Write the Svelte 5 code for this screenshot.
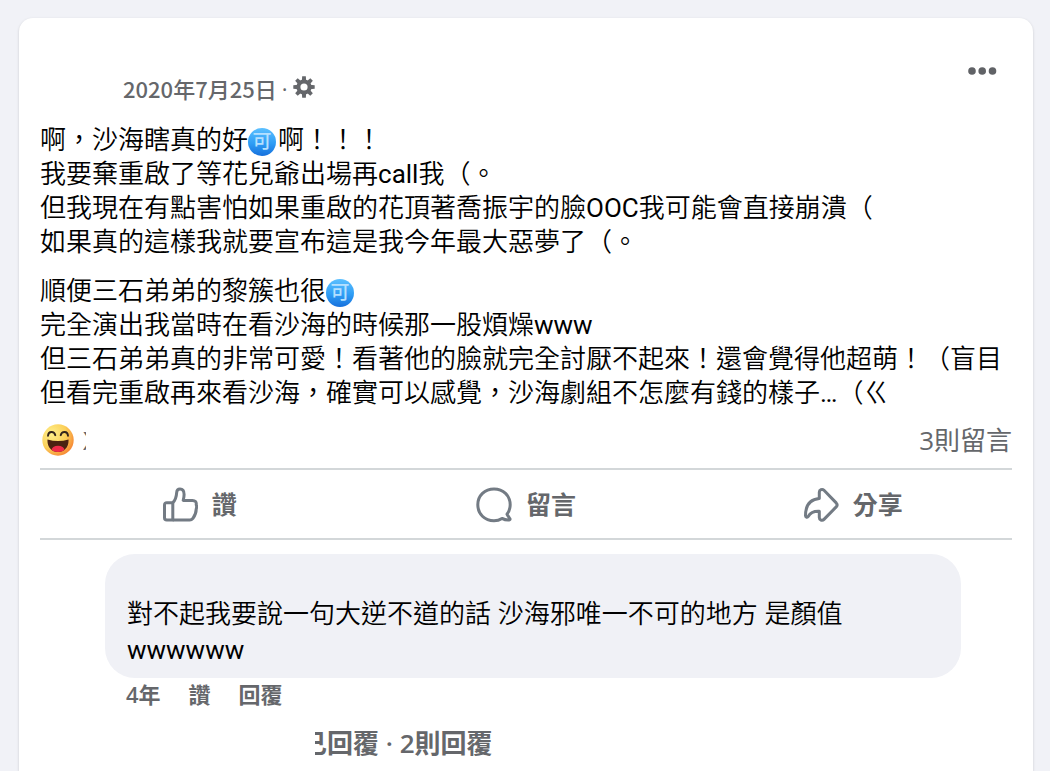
<script>
  const paragraphs = [
    [
      "啊，沙海瞎真的好[可]啊！！！",
      "我要棄重啟了等花兒爺出場再call我（。",
      "但我現在有點害怕如果重啟的花頂著喬振宇的臉OOC我可能會直接崩潰（",
      "如果真的這樣我就要宣布這是我今年最大惡夢了（。",
    ],
    [
      "順便三石弟弟的黎簇也很[可]",
      "完全演出我當時在看沙海的時候那一股煩燥www",
      "但三石弟弟真的非常可愛！看著他的臉就完全討厭不起來！還會覺得他超萌！（盲目",
      "但看完重啟再來看沙海，確實可以感覺，沙海劇組不怎麼有錢的樣子…（ㄍ",
    ],
  ];

  const comment = ["對不起我要說一句大逆不道的話 沙海邪唯一不可的地方 是顏值", "wwwwww"];

  const teeth = [0, 45, 90, 135, 180, 225, 270, 315];

  let liked = $state(false);

  // splits out the [可] emoji and latin words, which get their own styling
  function tokens(line) {
    return line.split(/(\[可\]|[A-Za-z…]+)/).filter(Boolean);
  }
</script>

{#snippet textLine(line)}
  <span class="line"
    >{#each tokens(line) as token}{#if token === "[可]"}<span class="badge">可</span
        >{:else if /^[A-Za-z…]/.test(token)}<span class="latin">{token}</span>{:else}{token}{/if}{/each}</span
  >
{/snippet}

<main class="page">
  <article class="card">
    <header class="header">
      <div class="header__meta">
        <a class="header__date" href="#post">2020年7月25日</a>
        <span class="header__dot">·</span>
        <svg class="header__gear" viewBox="0 0 22 22" aria-label="自訂">
          {#each teeth as angle}
            <path d="M9.2 0.3h3.6l0.4 5h-4.4z" transform="rotate({angle} 11 11)" fill="#65676b" />
          {/each}
          <circle cx="11" cy="11" r="5.6" fill="none" stroke="#65676b" stroke-width="4" />
        </svg>
      </div>
      <button class="header__menu" aria-label="更多">
        <svg width="30" height="10" viewBox="0 0 30 10" fill="#606266">
          <circle cx="5" cy="5" r="3.8" />
          <circle cx="15.2" cy="5" r="3.8" />
          <circle cx="25.5" cy="5" r="3.8" />
        </svg>
      </button>
    </header>

    <div class="body">
      {#each paragraphs as lines}
        <p>
          {#each lines as line}
            {@render textLine(line)}
          {/each}
        </p>
      {/each}
    </div>

    <div class="stats">
      <div class="stats__reactions">
        <svg width="32" height="32" viewBox="0 0 32 32" aria-label="哈">
          <defs>
            <radialGradient id="face" cx="0.3" cy="0.3" r="0.85">
              <stop offset="0" stop-color="#fff08a" />
              <stop offset="0.55" stop-color="#fbcf58" />
              <stop offset="1" stop-color="#f5762b" />
            </radialGradient>
            <clipPath id="mouth">
              <path d="M5.5 15.5c7 2 14 2 21 0 .6 7-4 12.5-10.5 12.5S4.9 22.5 5.5 15.5z" />
            </clipPath>
          </defs>
          <circle cx="16" cy="16" r="15.7" fill="url(#face)" />
          <g clip-path="url(#mouth)">
            <rect width="32" height="32" fill="#4b2111" />
            <ellipse cx="16" cy="26" rx="6.5" ry="4.3" fill="#ef2b4a" />
          </g>
          <path
            d="M6 11.8c.3-4.9 6.2-4.9 7.3-.6M18.7 11.2c1.1-4.3 7-4.3 7.3.6"
            fill="none"
            stroke="#33241c"
            stroke-width="1.9"
            stroke-linecap="round"
          />
        </svg>
        <span class="stats__name">X</span>
      </div>
      <a class="stats__comments" href="#comments">3則留言</a>
    </div>

    <div class="actions">
      <button class="action" aria-pressed={liked} onclick={() => (liked = !liked)}>
        <svg class="action__icon" viewBox="0 0 36 36">
          <path d="M2.5 18c0-1.5.8-2.3 2.3-2.3h6v17.3h-6c-1.5 0-2.3-.8-2.3-2.3z" />
          <path
            d="M10.8 15.7c2.4-2.2 3.6-5.8 3.9-10.3.1-2 1.4-3.4 3.3-3.4 2.7 0 4.1 2.2 4.1 5.4 0 2.2-.4 4-.9 6h9.3c2.6 0 4.2 1.8 3.7 4.2.6 1.4.6 2.7.1 4-.1 4.4-1.4 7.2-3.5 10-.8.9-1.7 1.4-3 1.4h-17"
          />
        </svg>
        <span>讚</span>
      </button>
      <button class="action">
        <svg class="action__icon" viewBox="0 0 36 36">
          <path
            d="M31 27.2c2.1-2.7 3.2-5.8 3.2-9.4C34.2 8.6 27.2 2 18 2S1.8 8.6 1.8 17.8 8.8 33.8 18 33.8c3.2 0 5.8-.9 8-2.4 2.3 1.3 4.6 1.8 7.2 1.6.8-.1 1-.6.8-1.2-.9-1.4-2-2.8-3-4.6z"
          />
        </svg>
        <span>留言</span>
      </button>
      <button class="action">
        <svg class="action__icon" viewBox="0 0 36 36">
          <path
            d="M16.3 11.6V5.2c0-2.5 2.9-3.7 4.7-1.9l12.2 12.6c1.1 1.2 1.1 2.8 0 4L21 32.4c-1.8 1.8-4.7.6-4.7-1.9v-6.2c-5.5-.3-8.8 1.2-11.1 5.2-.8 1.3-2.7.8-2.7-.7 0-9.8 4.3-16.4 13.8-17.2z"
          />
        </svg>
        <span>分享</span>
      </button>
    </div>

    <section class="comments" id="comments">
      <div class="bubble">
        <p>
          {#each comment as line}
            {@render textLine(line)}
          {/each}
        </p>
      </div>
      <div class="comments__tools">
        <a href="#comment">4年</a>
        <button>讚</button>
        <button>回覆</button>
      </div>
      <button class="replies">
        <span class="replies__cut">已</span><span>回覆 · 2則回覆</span>
      </button>
    </section>
  </article>
</main>

<style>
  :global(body) {
    margin: 0;
    background: #f1f2f7;
  }

  .page {
    box-sizing: border-box;
    display: flex;
    flex-direction: column;
    min-height: 100vh;
    padding: 18px 17px 0 19px;
    color: #000;
    font-family: "Open Sans", "Noto Sans CJK TC", sans-serif;
    font-size: 26px;
    line-height: 34px;
  }

  a,
  button {
    padding: 0;
    border: 0;
    background: none;
    color: #65676b;
    font: inherit;
    text-decoration: none;
    cursor: pointer;
  }

  p {
    margin: 0;
    font-weight: 350;
  }

  .line {
    display: block;
  }

  .latin {
    font-family: Roboto, "Open Sans", sans-serif;
    font-weight: 400;
    line-height: 1;
  }

  .badge {
    display: inline-block;
    width: 28px;
    height: 28px;
    margin-right: 2px;
    border-radius: 50%;
    background: linear-gradient(#5cc0ff, #2f9df5 55%, #1670dc);
    color: #b5e0ff;
    font-size: 19px;
    font-weight: 500;
    line-height: 27px;
    text-align: center;
    vertical-align: middle;
  }

  .card {
    flex: 1;
    padding: 38px 21px 0;
    border-radius: 14px 14px 0 0;
    background: #fff;
    box-shadow: 0 1px 3px rgba(0, 0, 0, 0.16);
  }

  .header {
    display: flex;
    justify-content: space-between;
    padding: 0 15px 0 83px;
  }

  .header__meta {
    display: flex;
    align-items: center;
    gap: 5px;
    padding: 16px 0 2px;
    color: #65676b;
    font-family: "Noto Sans CJK TC", sans-serif;
    font-size: 22px;
    font-weight: 500;
    line-height: 32px;
  }

  .header__dot {
    font-family: "Open Sans", sans-serif;
  }

  .header__gear {
    width: 22px;
    height: 22px;
    margin-bottom: 2px;
  }

  .header__menu {
    display: flex;
    align-items: center;
    height: 30px;
  }

  .body {
    display: grid;
    gap: 15px;
    margin-top: 16px;
  }

  .stats {
    display: flex;
    align-items: center;
    justify-content: space-between;
    padding: 14px 0 11px;
    border-bottom: 2px solid #d3d7d9;
  }

  .stats__reactions {
    display: flex;
    align-items: center;
    gap: 9px;
    padding-left: 2px;
    color: #65676b;
  }

  .stats__name {
    width: 3px;
    overflow: hidden;
  }

  .actions {
    display: grid;
    grid-template-columns: repeat(3, 1fr);
    gap: 8px;
    border-bottom: 2px solid #d3d7d9;
  }

  .action {
    display: flex;
    align-items: center;
    justify-content: center;
    gap: 14px;
    height: 68px;
    font-size: 25px;
    font-weight: 600;
  }

  .action__icon {
    width: 36px;
    height: 36px;
    margin-top: 2px;
    fill: none;
    stroke: #737b84;
    stroke-width: 3;
    stroke-linejoin: round;
  }

  .comments {
    padding: 14px 51px 0 65px;
  }

  .bubble {
    padding: 41px 22px 11px;
    border-radius: 30px;
    background: #f0f1f6;
    line-height: 36px;
  }

  .comments__tools {
    display: flex;
    gap: 28px;
    padding-left: 21px;
    font-size: 22px;
    font-weight: 600;
    line-height: 32px;
  }

  .replies {
    display: flex;
    margin: 16px 0 0 210px;
    font-weight: 600;
  }

  .replies__cut {
    display: flex;
    justify-content: flex-end;
    width: 12px;
    overflow: hidden;
  }
</style>
